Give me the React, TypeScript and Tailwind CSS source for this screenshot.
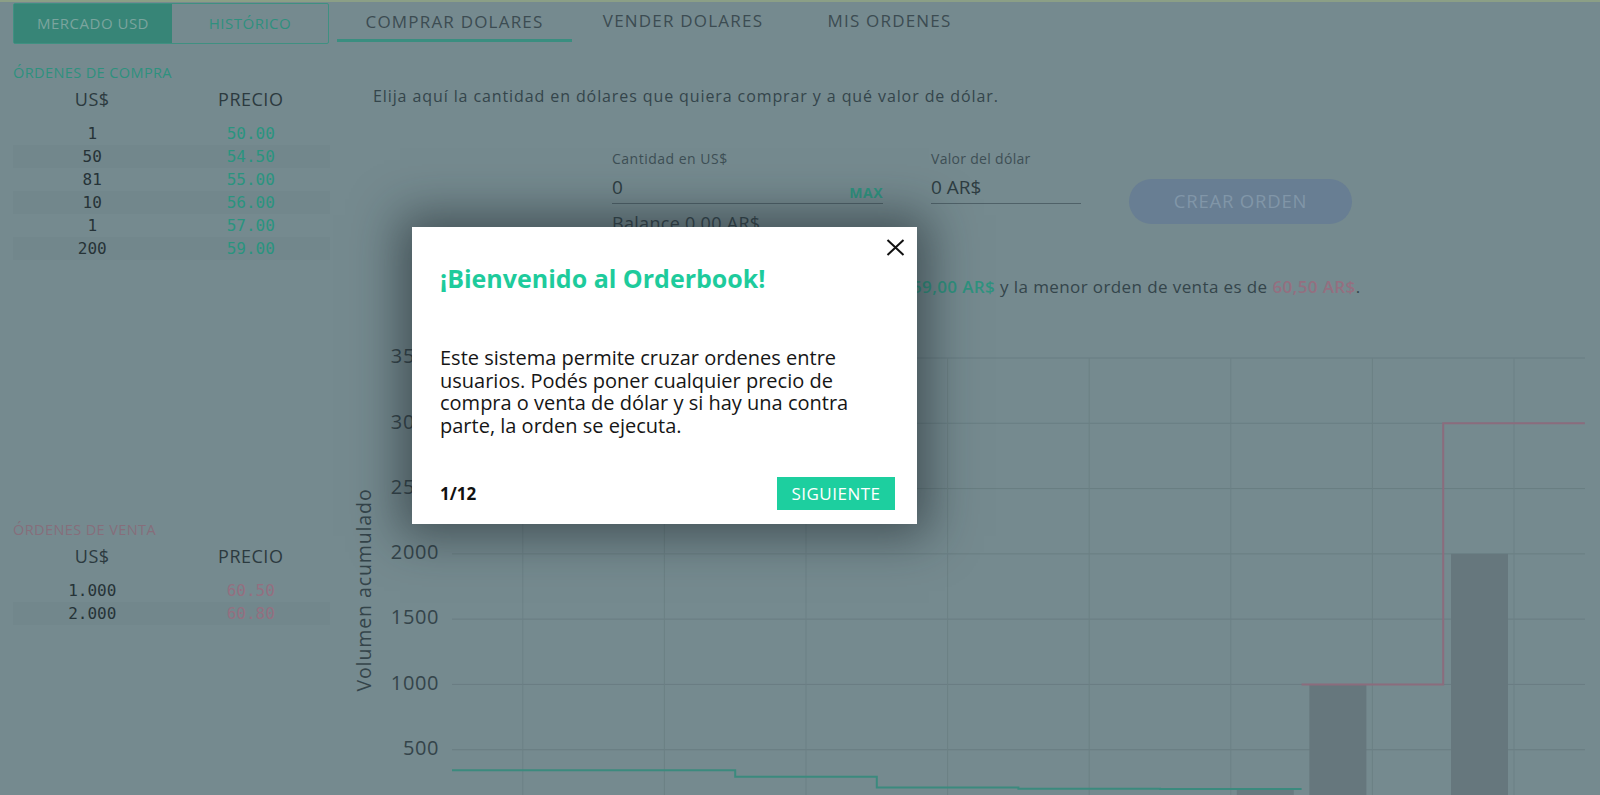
import React from 'react'

const sans = "font-['Open_Sans','Noto_Sans',sans-serif]"
const mono = "font-['DejaVu_Sans_Mono','Liberation_Mono',monospace]"

const buyOrders = [
  { q: '1', p: '50.00' },
  { q: '50', p: '54.50' },
  { q: '81', p: '55.00' },
  { q: '10', p: '56.00' },
  { q: '1', p: '57.00' },
  { q: '200', p: '59.00' },
]

const sellOrders = [
  { q: '1.000', p: '60.50' },
  { q: '2.000', p: '60.80' },
]

// chart geometry, in page pixels; svg sits at (337, 340)
const OX = 337
const OY = 340
const Y0 = 814
const K = 0.13057
const X0 = 452
const BW = 141.6
const bidCum = [343, 342, 292, 211, 201, 200]
const askCum = [1000, 3000]

const yOf = (v: number) => Y0 - v * K - OY
const xOf = (band: number) => X0 + BW * band - OX

const stepPath = (vals: number[], start: number) =>
  vals
    .map((v, i) => {
      const x0 = xOf(start + i)
      const x1 = x0 + BW
      const y = yOf(v)
      return `${i === 0 ? 'M' : 'L'}${x0} ${y} L${x1} ${y}`
    })
    .join(' ')

const OrderTable = ({
  title,
  titleColor,
  priceColor,
  rows,
}: {
  title: string
  titleColor: string
  priceColor: string
  rows: { q: string; p: string }[]
}) => (
  <div className="flex flex-col">
    <p className={`text-[14.5px] leading-[16px] tracking-[0.4px] uppercase ${titleColor}`}>{title}</p>
    <div className="mt-[8px] grid grid-cols-2 text-center text-[18px] leading-[20px] tracking-[0.5px] text-[#2c3a3f]">
      <span>US$</span>
      <span>PRECIO</span>
    </div>
    <div className="mt-[13px] flex flex-col">
      {rows.map((r, i) => (
        <div
          key={i}
          className={`grid grid-cols-2 h-[23px] items-center text-center text-[16px] ${mono} ${i % 2 === 1 ? 'bg-[#72878c]' : ''}`}
        >
          <span className="text-[#263337]">{r.q}</span>
          <span className={priceColor}>{r.p}</span>
        </div>
      ))}
    </div>
  </div>
)

const DepthChart = () => {
  const hLines = [3500, 3000, 2500, 2000, 1500, 1000, 500]
  return (
    <svg width={1263} height={460} className="block mt-[43px]">
      {hLines.map((v) => (
        <line key={v} x1={X0 - OX} x2={1585 - OX} y1={yOf(v)} y2={yOf(v)} stroke="#697d82" strokeWidth={1} />
      ))}
      {Array.from({ length: 8 }).map((_, k) => (
        <line
          key={k}
          x1={xOf(k + 0.5)}
          x2={xOf(k + 0.5)}
          y1={yOf(3500)}
          y2={460}
          stroke="#6c8085"
          strokeWidth={1}
        />
      ))}
      {hLines.map((v) => (
        <text
          key={v}
          x={439 - OX}
          y={yOf(v)}
          textAnchor="end"
          dominantBaseline="middle"
          fontSize={20}
          letterSpacing={0.6}
          fill="#34444a"
          fontFamily="Open Sans, sans-serif"
        >
          {v}
        </text>
      ))}
      <text
        x={0}
        y={0}
        transform={`translate(${366 - OX} ${589 - OY}) rotate(-90)`}
        textAnchor="middle"
        dominantBaseline="middle"
        fontSize={19.5}
        letterSpacing={0.9}
        fill="#34444a"
        fontFamily="Open Sans, sans-serif"
      >
        Volumen acumulado
      </text>
      {/* bars */}
      <rect x={xOf(5.5) + 6} y={yOf(200)} width={57} height={200 * K + 20} fill="#687a80" />
      <rect x={xOf(6.5) - 63} y={yOf(1000)} width={57} height={1000 * K + 20} fill="#66777d" />
      <rect x={xOf(7.5) - 63} y={yOf(2000)} width={57} height={2000 * K + 20} fill="#66777d" />
      {/* step lines */}
      <path d={stepPath(bidCum, 0)} fill="none" stroke="#3b8a7e" strokeWidth={2} />
      <path d={stepPath(askCum, 6)} fill="none" stroke="#8b6c7d" strokeWidth={2} />
    </svg>
  )
}

const WelcomeModal = () => (
  <div className="absolute left-[412px] top-[225px] w-[505px] h-[297px] bg-white flex flex-col px-[28px] pt-[12px] shadow-[0_0_45px_12px_rgba(25,35,40,0.55)]">
    <div className="flex justify-end h-[16px] -mr-[16px]">
      <svg width="19" height="17" viewBox="0 0 19 17">
        <path d="M1.5 1 L17.5 16 M17.5 1 L1.5 16" stroke="#111" strokeWidth="2" fill="none" />
      </svg>
    </div>
    <h2 className="mt-[8px] text-[25px] leading-[30px] font-bold text-[#1ecb9c]">¡Bienvenido al Orderbook!</h2>
    <p className="mt-[54px] text-[20px] leading-[22.7px] text-[#161616]">
      Este sistema permite cruzar ordenes entre usuarios. Podés poner cualquier precio de compra o venta de dólar y si
      hay una contra parte, la orden se ejecuta.
    </p>
    <div className="mt-auto mb-[14px] flex items-center justify-between">
      <span className="text-[17px] font-bold text-[#111]">1/12</span>
      <button className="w-[118px] h-[33px] -mr-[6px] bg-[#1dcf9f] text-white text-[17px] tracking-[0.5px] uppercase">
        Siguiente
      </button>
    </div>
  </div>
)

export default function App() {
  return (
    <div className={`relative w-full h-[795px] overflow-hidden bg-[#758a8f] border-t-2 border-[#8b9f86] ${sans}`}>
      <div className="flex h-full">
        {/* left: order book */}
        <aside className="w-[317px] ml-[13px] pt-px flex flex-col">
          <div className="flex h-[41px] w-[316px] border border-[#3f9081] rounded-[2px]">
            <div className="w-[158px] bg-[#378577] text-[#7ba49e] text-[15px] tracking-[0.5px] uppercase flex items-center justify-center">
              Mercado USD
            </div>
            <div className="flex-1 text-[#2f907e] text-[15px] tracking-[0.5px] uppercase flex items-center justify-center">
              Histórico
            </div>
          </div>
          <div className="mt-[21px] h-[195px]">
            <OrderTable
              title="Órdenes de compra"
              titleColor="text-[#2e917e]"
              priceColor="text-[#2a947f]"
              rows={buyOrders}
            />
          </div>
          <div className="mt-[262px]">
            <OrderTable
              title="Órdenes de venta"
              titleColor="text-[#866e7b]"
              priceColor="text-[#946f80]"
              rows={sellOrders}
            />
          </div>
        </aside>

        {/* right: trading */}
        <main className="flex-1 ml-[7px] flex flex-col">
          <nav className="flex h-[40px] text-[17px] tracking-[1.2px] uppercase text-[#3c4c52]">
            <div className="w-[235px] flex items-center justify-center pt-[3px] border-b-[3px] border-[#3a8e80]">
              Comprar dolares
            </div>
            <div className="w-[222px] flex items-center justify-center pb-[3px]">Vender dolares</div>
            <div className="w-[191px] flex items-center justify-center pb-[3px]">Mis ordenes</div>
          </nav>

          <div className="pl-[36px] flex flex-col">
            <p className="mt-[43px] text-[16px] leading-[22px] tracking-[0.9px] text-[#34454b]">
              Elija aquí la cantidad en dólares que quiera comprar y a qué valor de dólar.
            </p>

            <div className="mt-[44px] ml-[239px] flex items-start">
              <div className="w-[271px] flex flex-col">
                <span className="text-[14px] leading-[16px] tracking-[0.5px] text-[#3e4f55]">Cantidad en US$</span>
                <div className="flex items-end justify-between pt-[8px] pb-[4px] border-b border-[#4f6168]">
                  <span className="text-[19px] leading-[24px] text-[#2e3d42]">0</span>
                  <span className="text-[14px] leading-[18px] tracking-[0.5px] font-bold text-[#2f937f] -mb-[3px]">
                    MAX
                  </span>
                </div>
                <span className="mt-[8px] text-[18px] leading-[22px] tracking-[0.3px] text-[#34454b]">
                  Balance 0,00 AR$
                </span>
              </div>
              <div className="w-[150px] ml-[48px] flex flex-col">
                <span className="text-[14px] leading-[16px] tracking-[0.3px] text-[#3e4f55]">Valor del dólar</span>
                <div className="flex items-end pt-[8px] pb-[4px] border-b border-[#4f6168]">
                  <span className="text-[19px] leading-[24px] text-[#2e3d42]">0 AR$</span>
                </div>
              </div>
              <button className="ml-[48px] mt-[28px] w-[223px] h-[45px] rounded-full bg-[#687e93] text-[#8196a8] text-[18.5px] tracking-[0.8px] uppercase">
                Crear orden
              </button>
            </div>

            <p className="mt-[42px] ml-[239px] w-[770px] text-center text-[17px] leading-[22px] tracking-[0.4px] text-[#34454b]">
              La mayor orden de compra es de <span className="text-[#2f937f] font-semibold">59,00 AR$</span> y la menor
              orden de venta es de <span className="text-[#946f80] font-semibold">60,50 AR$</span>.
            </p>
          </div>

          <DepthChart />
        </main>
      </div>

      <WelcomeModal />
    </div>
  )
}
